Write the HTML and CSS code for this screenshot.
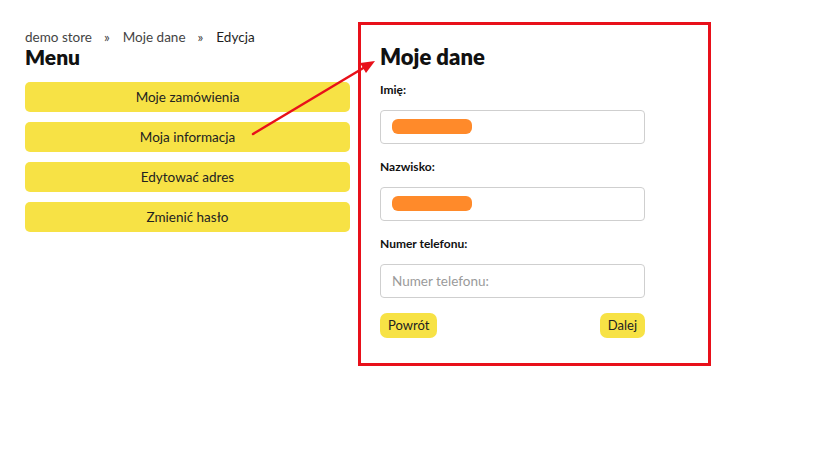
FILE: index.html
```html
<!DOCTYPE html>
<html lang="pl">
<head>
<meta charset="utf-8">
<title>Moje dane</title>
<link rel="stylesheet" href="styles.css">
</head>
<body>
<div class="page">
  <aside class="sidebar">
    <nav class="breadcrumb">
      <a href="#">demo store</a><span class="sep">»</span><a href="#">Moje dane</a><span class="sep">»</span><span class="current">Edycja</span>
    </nav>
    <h2 class="menu-title">Menu</h2>
    <div class="menu">
      <a class="menu-btn" href="#">Moje zamówienia</a>
      <a class="menu-btn" href="#">Moja informacja</a>
      <a class="menu-btn" href="#">Edytować adres</a>
      <a class="menu-btn" href="#">Zmienić hasło</a>
    </div>
  </aside>
  <section class="panel">
    <h1 class="panel-title">Moje dane</h1>
    <div class="field">
      <label class="label">Imię:</label>
      <div class="input"><span class="redact"></span></div>
    </div>
    <div class="field">
      <label class="label">Nazwisko:</label>
      <div class="input"><span class="redact"></span></div>
    </div>
    <div class="field">
      <label class="label">Numer telefonu:</label>
      <input class="input text-input" type="text" placeholder="Numer telefonu:">
    </div>
    <div class="actions">
      <button class="small-btn">Powrót</button>
      <button class="small-btn">Dalej</button>
    </div>
  </section>
  <svg class="arrow" width="816" height="462" viewBox="0 0 816 462">
    <line x1="253" y1="134" x2="365" y2="67" stroke="#e8101a" stroke-width="2.5" stroke-linecap="round"/>
    <polygon points="375,61 366,73 360,63" fill="#e8101a"/>
  </svg>
</div>
</body>
</html>
```

FILE: styles.css
```css
html, body {
  margin: 0;
  padding: 0;
  background: #ffffff;
}
body {
  font-family: "Lato", "Noto Sans", sans-serif;
  color: #1e1e1e;
}
.page {
  position: relative;
  display: flex;
  align-items: flex-start;
  width: 816px;
  height: 462px;
}
.sidebar {
  width: 325px;
  margin-left: 25px;
  margin-top: 29px;
}
.breadcrumb {
  font-size: 13.5px;
  line-height: 16px;
  color: #444;
}
.breadcrumb a {
  color: #444;
  text-decoration: none;
}
.breadcrumb .sep {
  margin: 0 13px 0 12px;
  color: #444;
}
.breadcrumb .current {
  color: #1e1e1e;
}
.menu-title {
  margin: 0;
  font-size: 21px;
  line-height: 24px;
  font-weight: 800;
  color: #111;
}
.menu {
  margin-top: 13px;
  display: flex;
  flex-direction: column;
  gap: 10px;
}
.menu-btn {
  display: block;
  height: 30px;
  line-height: 30px;
  text-align: center;
  background: #f7e245;
  border-radius: 5px;
  font-size: 13.5px;
  color: #222;
  text-decoration: none;
}
.panel {
  margin-left: 8px;
  margin-top: 22px;
  width: 265px;
  padding: 19px 63px 25px 19px;
  border: 3px solid #e8101a;
}
.panel-title {
  margin: 0 0 12px;
  font-size: 22px;
  line-height: 26px;
  font-weight: 800;
  color: #111;
}
.field {
  margin-bottom: 15.5px;
}
.label {
  display: block;
  font-size: 12px;
  line-height: 16px;
  font-weight: 700;
  color: #111;
  margin-bottom: 11.5px;
}
.input {
  box-sizing: border-box;
  display: flex;
  align-items: center;
  width: 265px;
  height: 34px;
  border: 1px solid #cfcfcf;
  border-radius: 4px;
  padding: 0 12px 0 11px;
  background: #fff;
}
.redact {
  display: block;
  width: 80px;
  height: 15px;
  background: #ff8a2a;
  border-radius: 6px;
}
.text-input {
  font-family: "Lato", "Noto Sans", sans-serif;
  font-size: 13.5px;
  color: #333;
  outline: none;
}
.text-input::placeholder {
  color: #9a9a9a;
}
.actions {
  display: flex;
  justify-content: space-between;
  margin-top: -0.5px;
}
.small-btn {
  height: 25px;
  padding: 0 8px;
  border: none;
  border-radius: 7px;
  background: #f7e245;
  font-family: "Lato", "Noto Sans", sans-serif;
  font-size: 13px;
  color: #222;
}
.arrow {
  position: absolute;
  left: 0;
  top: 0;
  pointer-events: none;
}
```
